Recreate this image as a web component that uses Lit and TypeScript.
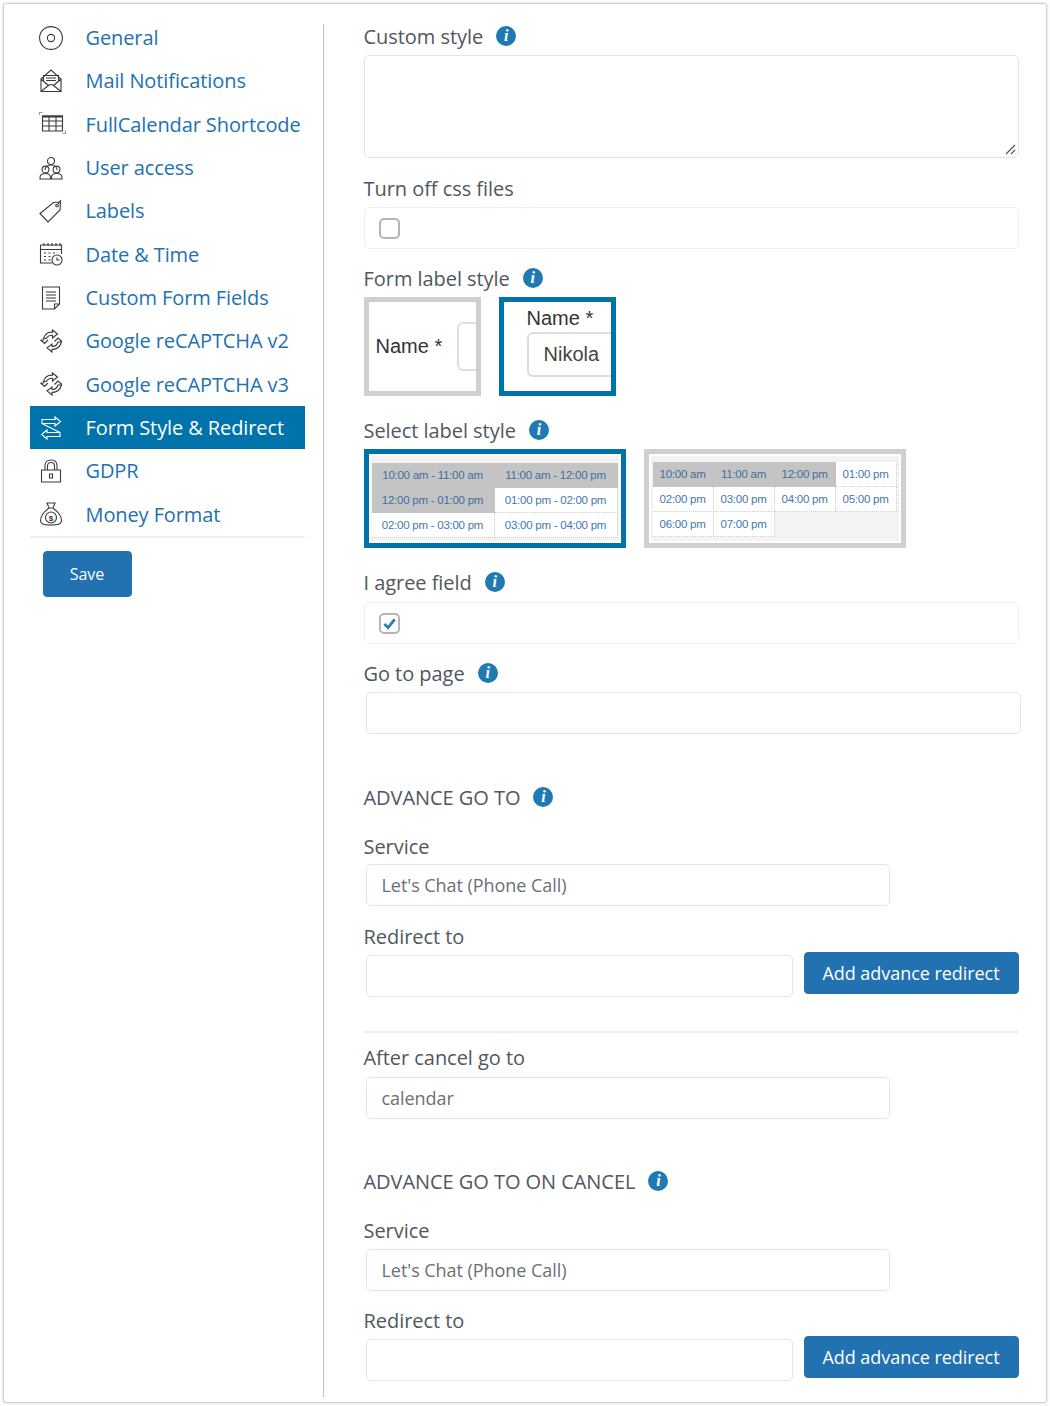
import { LitElement, html, css, svg } from "lit";
import { customElement } from "lit/decorators.js";

const recaptcha = svg`<path d="M4.5 9.5C6 5 9.5 2.8 13.5 3.2V1l5 4-5 4V6.3c-3-.2-5 1-6.2 3.2zM1.5 11h4M22.5 13c-1.5 4.8-5 7.6-9.5 7.4V23l-5-4.2 5-3.8v2.5c3 .2 5-1.200 6-4.500zM18.500 13h4M1.500 11l4 3.500 3.500-3.500M23 12.500l-4-3.500-3.500 3.500"/>`;

const icons: Record<string, unknown> = {
  general: svg`<circle cx="12" cy="12" r="11.400"/><circle cx="12" cy="12" r="3.600"/>`,
  mail: svg`<path d="M2 10 12 1l10 9v12.500H2zM4.500 12V6.500h15V12M2 10l7.500 6.500M22 10l-7.500 6.500M2.500 22l7-5.500c1.500-1.200 3.500-1.200 5 0l7 5.500M7 9h10M7 11.500h10"/>`,
  table: svg`<path d="M3.500 4h20v15h-20zM3.500 9h20M3.500 14h20M10 4v15M17 4v15"/><path d="M3.500 4.500h20" stroke-width="2"/><path d="M.5 3V.5h3M26.500 18.500v3h-3" stroke="#999"/>`,
  users: svg`<circle cx="12" cy="5" r="3.500"/><path d="M6 14c0-3 2.500-5 6-5s6 2 6 5"/><circle cx="6.500" cy="13.500" r="3.400"/><circle cx="17.500" cy="13.500" r="3.400"/><path d="M1 23v-1.500c0-2.500 2.500-4 5.500-4s5 1.500 5 4V23zM12.500 23v-1.500c0-2.500 2-4 5-4s5.500 1.500 5.500 4V23z"/>`,
  tag: svg`<path d="M1 14.500 14.500 3.500l7-.5-.5 8L9 23z"/><circle cx="18" cy="6.500" r="1.300"/><path d="M19 5l3-4" />`,
  date: svg`<path d="M1.500 3h21v9M13 21H1.500V3M1.500 7.500h21M5 1v3M9 1v3M13 1v3M17 1v3M21 1v3M5 11h2M9.500 11h2M14 11h2M5 14.500h2M9.500 14.500h2M5 18h2M9.500 18h2"/><circle cx="18" cy="18" r="5"/><path d="M18 15.500V18h2.500"/>`,
  form: svg`<path d="M3.500 1h17v17l-5 5h-12zM20.500 18h-5v5M7 6h10M7 9h10M7 12h10M7 15h10"/>`,
  recaptcha,
  swap: svg`<path d="M16 1l5.500 4.500L16 10V7.500H3V3.500h13zM8 14l-5.500 4.500L8 23v-2.500h13v-4H8zM3 7.500 21 16.500" />`,
  lock: svg`<path d="M2.500 11h19v12h-19zM6 11V6.500C6 3 8.500 1 12 1s6 2 6 5.500V11M8.500 11V7c0-2 1.500-3.500 3.500-3.500s3.500 1.500 3.500 3.500v4M10.500 15h3v4h-3z"/>`,
  money: svg`<path d="M8 1h8l-2 5h-4zM10 6c-4 3-8.500 8-8.500 12.500 0 3.500 3 4.500 10.500 4.500s10.500-1 10.500-4.500C22.500 14 18 9 14 6"/><circle cx="12" cy="15.500" r="5.500"/><text x="12" y="18.500" text-anchor="middle" font-size="8" font-weight="700" font-family="Liberation Sans" fill="#333" stroke="none">$</text>`,
};

const menu: [string, string][] = [
  ["general", "General"], ["mail", "Mail Notifications"], ["table", "FullCalendar Shortcode"],
  ["users", "User access"], ["tag", "Labels"], ["date", "Date & Time"], ["form", "Custom Form Fields"],
  ["recaptcha", "Google reCAPTCHA v2"], ["recaptcha", "Google reCAPTCHA v3"],
  ["swap", "Form Style & Redirect"], ["lock", "GDPR"], ["money", "Money Format"],
];

const range = ["10:00 am - 11:00 am","11:00 am - 12:00 pm","12:00 pm - 01:00 pm","01:00 pm - 02:00 pm","02:00 pm - 03:00 pm","03:00 pm - 04:00 pm"];
const hours = ["10:00 am","11:00 am","12:00 pm","01:00 pm","02:00 pm","03:00 pm","04:00 pm","05:00 pm","06:00 pm","07:00 pm"];

@customElement("app-root")
export class AppRoot extends LitElement {
  static styles = css`
    :host { display: block; width: 1050px; height: 1406px; overflow: hidden; background: #fff; font-family: "Open Sans", sans-serif; color: #50575e; }
    * { box-sizing: border-box; }
    .frame { display: flex; margin: 3px 3px 0 3px; width: 1044px; height: 1400px; border: 1.500px solid #d0d0d0; border-radius: 3px; box-shadow: 0 0 3px rgba(0,0,0,.18); background: #fff; overflow: hidden; }
    nav { width: 275px; margin-left: 25.500px; padding-top: 12px; flex: none; }
    .menu { border-bottom: 2px solid #eee; }
    .item { display: flex; align-items: center; height: 43.330px; padding-left: 9px; gap: 23px; color: #2271b1; font-size: 20px; letter-spacing: -.1px; white-space: nowrap; }
    .item.on { background: #0073aa; color: #fff; }
    .item svg { width: 24px; height: 24px; flex: none; fill: none; stroke: #3d3935; stroke-width: 1.100; overflow: visible; }
    .item.on svg { stroke: #fff; }
    .btn { border: 1px solid #2271b1; background: #2271b1; color: #fff; font-family: inherit; border-radius: 4px; padding: 0; }
    .save { display: block; width: 89px; height: 46px; margin: 13px 0 0 13px; font-size: 16px; }
    .rule { flex: none; width: 1.500px; height: 1373px; margin: 19.500px 0 0 18px; background: #c2c2c2; }
    main { width: 655px; margin-left: 39.500px; flex: none; padding-top: 20px; }
    .label { display: flex; align-items: center; gap: 13px; height: 24px; font-size: 20px; letter-spacing: -.05px; white-space: nowrap; }
    .info { width: 20px; height: 20px; border-radius: 50%; background: #1f7ab3; color: #fff; display: flex; align-items: center; justify-content: center; font: italic 700 16px "Liberation Serif", serif; flex: none; }
    .box { display: block; height: 42px; border: 1px solid #e4e4e4; border-radius: 5px; background: #fff; }
    .ghost { display: flex; align-items: center; padding-left: 14px; border-color: #f1f1f1; }
    .area { height: 103px; position: relative; }
    .grip { position: absolute; right: 2px; bottom: 2px; width: 11px; height: 11px; stroke: #555; stroke-width: 1.200; fill: none; }
    .in { margin-left: 2px; width: 524px; padding: 0 15px; display: flex; align-items: center; font-size: 18px; letter-spacing: -.05px; color: #6a7076; }
    .full { width: 655px; }
    .check { width: 21px; height: 21px; border: 2px solid #b5b5b5; border-radius: 5px; background: #fff; display: flex; align-items: center; justify-content: center; }
    .check svg { width: 15px; height: 15px; fill: none; stroke: #2c7cc0; stroke-width: 3; }
    .thumbs { display: flex; }
    .ft { width: 117px; height: 99px; border: 5px solid #cfcfcf; overflow: hidden; background: #fff; font-family: "Liberation Sans", sans-serif; color: #333; font-size: 20px; position: relative; white-space: nowrap; }
    .ft.sel { border-color: #0073aa; margin-left: 18px; padding: 5px 0 0 23px; }
    .ft.row { display: flex; align-items: center; padding-left: 7px; gap: 15px; }
    .ft-in { flex: none; border: 2px solid #ddd; border-radius: 6px; background: #fff; }
    .row .ft-in { width: 40px; height: 49px; }
    .sel .ft-in { width: 100px; height: 45px; margin-top: 2px; padding: 0 0 0 15px; display: flex; align-items: center; color: #444; }
    .st { width: 262px; height: 99px; border: 5px solid #cfcfcf; background: #fff; padding: 2px; font-family: "Liberation Sans", sans-serif; }
    .st.sel { border-color: #0073aa; }
    .st + .st { margin-left: 18px; }
    .st-in { height: 100%; background: #f3f3f3; display: grid; align-content: start; padding: 7px 1px 0; }
    .two { grid-template-columns: 1fr 1fr; padding: 7px 1px 0; }
    .four { grid-template-columns: repeat(4, 61px); padding: 6px 2px 0; }
    .cell { height: 25px; display: flex; align-items: center; justify-content: center; background: #fff; color: #3f78b0; font-size: 11.500px; letter-spacing: -.25px; border-bottom: 1px dotted #ccc; border-right: 1px dotted #ccc; white-space: nowrap; }
    .cell.g { background: #c4c4c4; border-color: #c4c4c4; color: #3f6f9f; }
    .row2 { display: flex; align-items: flex-start; gap: 11px; margin-top: 4px; }
    .row2 .box { width: 428px; margin-top: 3px; }
    .add { width: 215px; height: 42px; font-size: 18px; letter-spacing: -.05px; flex: none; }
    hr { border: 0; height: 2px; background: #eee; margin: 34px 0 12px; }
    .g7 { margin-top: 7px; } .g6 { margin-top: 6px; } .g8 { margin-top: 8px; }
    .l17 { margin-top: 17px; } .l18 { margin-top: 18px; } .l22 { margin-top: 22px; } .l25 { margin-top: 25px; } .l51 { margin-top: 51px; } .l50 { margin-top: 50px; }
  `;

  private info() { return html`<span class="info">i</span>`; }

  render() {
    return html`<div class="frame">
      <nav>
        <div class="menu">
          ${menu.map(([i, t]) => html`<div class="item ${t.startsWith("Form Style") ? "on" : ""}"><svg viewBox="0 0 24 24">${icons[i]}</svg><span>${t}</span></div>`)}
        </div>
        <button class="btn save">Save</button>
      </nav>
      <div class="rule"></div>
      <main>
        <div class="label">Custom style ${this.info()}</div>
        <div class="box area g7"><svg class="grip" viewBox="0 0 11 11"><path d="M1 10 10 1M6 10l4-4"/></svg></div>
        <div class="label l18">Turn off css files</div>
        <div class="box ghost g7"><span class="check"></span></div>
        <div class="label l17">Form label style ${this.info()}</div>
        <div class="thumbs g7">
          <div class="ft row"><span>Name *</span><div class="ft-in"></div></div>
          <div class="ft sel"><div>Name *</div><div class="ft-in">Nikola</div></div>
        </div>
        <div class="label l22">Select label style ${this.info()}</div>
        <div class="thumbs g7">
          <div class="st sel"><div class="st-in two">${range.map((t, i) => html`<div class="cell ${i < 3 ? "g" : ""}">${t}</div>`)}</div></div>
          <div class="st"><div class="st-in four">${hours.map((t, i) => html`<div class="cell ${i < 3 ? "g" : ""}">${t}</div>`)}</div></div>
        </div>
        <div class="label l22">I agree field ${this.info()}</div>
        <div class="box ghost g8"><span class="check"><svg viewBox="0 0 16 16"><path d="M2.500 8.500 6.500 12.500 13.500 3.500"/></svg></span></div>
        <div class="label l17">Go to page ${this.info()}</div>
        <div class="box in full g7"></div>
        <div class="label l51">ADVANCE GO TO ${this.info()}</div>
        <div class="label l25">Service</div>
        <div class="box in g6">Let's Chat (Phone Call)</div>
        <div class="label l18">Redirect to</div>
        <div class="row2"><div class="box in"></div><button class="btn add">Add advance redirect</button></div>
        <hr />
        <div class="label">After cancel go to</div>
        <div class="box in g8">calendar</div>
        <div class="label l50">ADVANCE GO TO ON CANCEL ${this.info()}</div>
        <div class="label l25">Service</div>
        <div class="box in g7">Let's Chat (Phone Call)</div>
        <div class="label l17">Redirect to</div>
        <div class="row2"><div class="box in"></div><button class="btn add">Add advance redirect</button></div>
      </main>
    </div>`;
  }
}
